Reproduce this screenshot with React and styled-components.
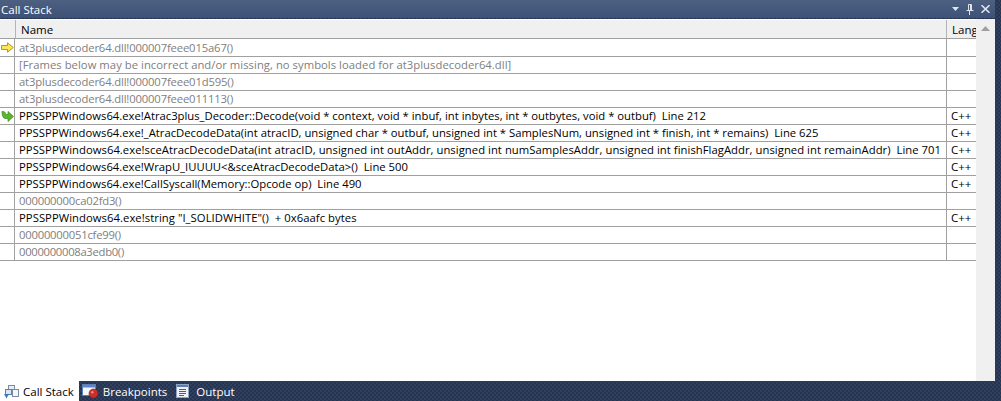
import React from 'react'
import styled, { createGlobalStyle } from 'styled-components'

const Global = createGlobalStyle`
    html, body {
        margin: 0;
        padding: 0;
        background: #293955;
    }
`

const Window = styled.div`
    width: 1001px;
    height: 401px;
    display: flex;
    flex-direction: column;
    overflow: hidden;
    background-color: #293955;
    background-image: repeating-conic-gradient(#2f4060 0% 25%, #263450 0% 50%);
    background-size: 4px 4px;
    font-family: 'Open Sans', 'Liberation Sans', sans-serif;
    font-size: 11.5px;
    color: #000;
`

const TitleBar = styled.div`
    height: 18px;
    width: 995px;
    flex: none;
    display: flex;
    align-items: center;
    justify-content: space-between;
    box-sizing: border-box;
    padding: 0 5px 0 1px;
    background: linear-gradient(#4d6082, #3d5277);
    color: #fff;
`

const TitleButtons = styled.div`
    display: flex;
    align-items: center;
    gap: 7px;
`

const Body = styled.div`
    flex: 1;
    display: flex;
    margin: 1px 6px 0 0;
    background: #fff;
    min-height: 0;
`

const Grid = styled.div`
    flex: 1;
    min-width: 0;
`

const HeaderRow = styled.div`
    display: grid;
    grid-template-columns: 15px 931px 30px;
    height: 20px;
    box-sizing: border-box;
    background: #f0f0f0;
    border-bottom: 1px solid #a0a0a0;
    border-top: 1px solid #fff;
`

const HeaderCell = styled.div`
    display: flex;
    align-items: center;
    padding-left: 5px;
    border-left: ${(p) => (p.$first ? 'none' : '1px solid #b4b4b4')};
    overflow: hidden;
    white-space: nowrap;
`

const Row = styled.div`
    display: grid;
    grid-template-columns: 15px 931px 30px;
    height: ${(p) => (p.$tall ? '18px' : '17px')};
    box-sizing: border-box;
    border-bottom: 1px solid #a0a0a0;
    color: ${(p) => (p.$dim ? '#808080' : '#000')};
`

const GlyphCell = styled.div`
    display: flex;
    align-items: center;
    justify-content: center;
    border-right: 1px solid #a0a0a0;
    box-sizing: border-box;
`

const NameCell = styled.div`
    padding: ${(p) => (p.$tall ? '1px' : '0')} 0 0 4px;
    font-size: 11.27px;
    line-height: 16px;
    letter-spacing: ${(p) => p.$track || 0}px;
    white-space: pre;
    overflow: hidden;
`

const LangCell = styled.div`
    padding-left: 4px;
    line-height: 16px;
    border-left: 1px solid #a0a0a0;
    color: #000;
    white-space: nowrap;
    overflow: hidden;
`

const Scrollbar = styled.div`
    width: 19px;
    flex: none;
    background: #f0f0f0;
    display: flex;
    justify-content: center;
    padding-top: 7px;
    box-sizing: border-box;
`

const TabStrip = styled.div`
    height: 20px;
    flex: none;
    display: flex;
    align-items: stretch;
    color: #fff;
`

const Tab = styled.div`
    display: flex;
    align-items: center;
    gap: ${(p) => (p.$wide ? '7px' : '4px')};
    padding: 0 ${(p) => (p.$active ? '5px' : '6px')} 0 3px;
    background: ${(p) => (p.$active ? '#fff' : 'transparent')};
    color: ${(p) => (p.$active ? '#000' : '#fff')};
`

const YellowArrow = () => (
    <svg width="13" height="11" viewBox="0 0 13 11">
        <path d="M0.5 3.5H6.5V0.8L12.3 5.5L6.5 10.2V7.5H0.5Z" fill="#ffe84d" stroke="#a89a2c" />
    </svg>
)

const GreenArrow = () => (
    <svg width="13" height="13" viewBox="0 0 13 13">
        <path d="M1 1.5C3 1 4.5 2 5 4.5H7V1.5L12.5 6.5L7 11.5V8.5H4C1.8 8 1 5 1 1.5Z" fill="#5cb531" stroke="#3b8a1e" strokeWidth="0.7" />
    </svg>
)

const CallStackIcon = () => (
    <svg width="16" height="15" viewBox="0 0 16 15">
        <rect x="5.5" y="1.5" width="6" height="5" fill="#e8eef6" stroke="#7a8ba3" />
        <rect x="9.5" y="5.5" width="6" height="7" fill="#f4f6fa" stroke="#7a8ba3" />
        <rect x="2.5" y="5.5" width="6" height="5" fill="#dbe6f3" stroke="#6a7f9c" />
        <path d="M1 10H6L3.5 14.5Z" fill="#3f79c4" />
    </svg>
)

const BreakpointsIcon = () => (
    <svg width="17" height="16" viewBox="0 0 17 16">
        <rect x="0.5" y="1.5" width="13" height="11" fill="#f3f6fb" stroke="#5d7fb5" />
        <rect x="1" y="2" width="12" height="2.5" fill="#5a86cf" />
        <circle cx="11.5" cy="10.5" r="4.5" fill="#c9302c" stroke="#8f1d1a" strokeWidth="0.6" />
        <circle cx="10.3" cy="9.2" r="1.2" fill="#ef8f85" />
    </svg>
)

const OutputIcon = () => (
    <svg width="13" height="14" viewBox="0 0 13 14">
        <rect x="0.5" y="0.5" width="12" height="13" fill="#eef2f8" stroke="#8fa3c0" />
        <rect x="1" y="1" width="11" height="2" fill="#5a7fb8" />
        <path d="M3 5.5H10M3 7.5H10M3 9.5H10M3 11.5H8" stroke="#4b5f7d" />
    </svg>
)

const frames = [
    { name: 'at3plusdecoder64.dll!000007feee015a67()', dim: true, mark: 'yellow', track: -0.15 },
    { name: '[Frames below may be incorrect and/or missing, no symbols loaded for at3plusdecoder64.dll]', dim: true, track: 0.033 },
    { name: 'at3plusdecoder64.dll!000007feee01d595()', dim: true, track: -0.15 },
    { name: 'at3plusdecoder64.dll!000007feee011113()', dim: true, track: -0.15 },
    { name: 'PPSSPPWindows64.exe!Atrac3plus_Decoder::Decode(void * context, void * inbuf, int inbytes, int * outbytes, void * outbuf)  Line 212', lang: 'C++', mark: 'green' },
    { name: 'PPSSPPWindows64.exe!_AtracDecodeData(int atracID, unsigned char * outbuf, unsigned int * SamplesNum, unsigned int * finish, int * remains)  Line 625', lang: 'C++' },
    { name: 'PPSSPPWindows64.exe!sceAtracDecodeData(int atracID, unsigned int outAddr, unsigned int numSamplesAddr, unsigned int finishFlagAddr, unsigned int remainAddr)  Line 701', lang: 'C++', track: 0.04 },
    { name: 'PPSSPPWindows64.exe!WrapU_IUUUU<&sceAtracDecodeData>()  Line 500', lang: 'C++' },
    { name: 'PPSSPPWindows64.exe!CallSyscall(Memory::Opcode op)  Line 490', lang: 'C++' },
    { name: '000000000ca02fd3()', dim: true, track: -0.22 },
    { name: 'PPSSPPWindows64.exe!string "I_SOLIDWHITE"()  + 0x6aafc bytes', lang: 'C++', track: 0.05 },
    { name: '00000000051cfe99()', dim: true, track: -0.22 },
    { name: '0000000008a3edb0()', dim: true, track: -0.3 },
]

const App = () => {
    return (
        <Window>
            <Global />
            <TitleBar>
                <span>Call Stack</span>
                <TitleButtons>
                    <svg width="7" height="4" viewBox="0 0 7 4"><path d="M0 0H7L3.5 4Z" fill="#dfe5ee" /></svg>
                    <svg width="8" height="11" viewBox="0 0 8 11"><path d="M2.5 0.5H5.5V6.5H2.5ZM4.5 1V6M0.5 6.5H7.5M3.5 7V11" fill="none" stroke="#dfe5ee" /></svg>
                    <svg width="9" height="8" viewBox="0 0 9 8"><path d="M0.5 0.2L8.5 7.8M8.5 0.2L0.5 7.8" stroke="#dfe5ee" strokeWidth="1.6" /></svg>
                </TitleButtons>
            </TitleBar>
            <Body>
                <Grid>
                    <HeaderRow>
                        <HeaderCell $first />
                        <HeaderCell>Name</HeaderCell>
                        <HeaderCell>Lang</HeaderCell>
                    </HeaderRow>
                    {frames.map((f, i) => (
                        <Row key={f.name} $dim={f.dim} $tall={i === 0}>
                            <GlyphCell>
                                {f.mark === 'yellow' && <YellowArrow />}
                                {f.mark === 'green' && <GreenArrow />}
                            </GlyphCell>
                            <NameCell $tall={i === 0} $track={f.track}>{f.name}</NameCell>
                            <LangCell>{f.lang}</LangCell>
                        </Row>
                    ))}
                </Grid>
                <Scrollbar>
                    <svg width="9" height="5" viewBox="0 0 9 5"><path d="M0 5H9L4.5 0Z" fill="#a0a0a0" /></svg>
                </Scrollbar>
            </Body>
            <TabStrip>
                <Tab $active><CallStackIcon />Call Stack</Tab>
                <Tab><BreakpointsIcon />Breakpoints</Tab>
                <Tab $wide><OutputIcon />Output</Tab>
            </TabStrip>
        </Window>
    )
}

export default App
